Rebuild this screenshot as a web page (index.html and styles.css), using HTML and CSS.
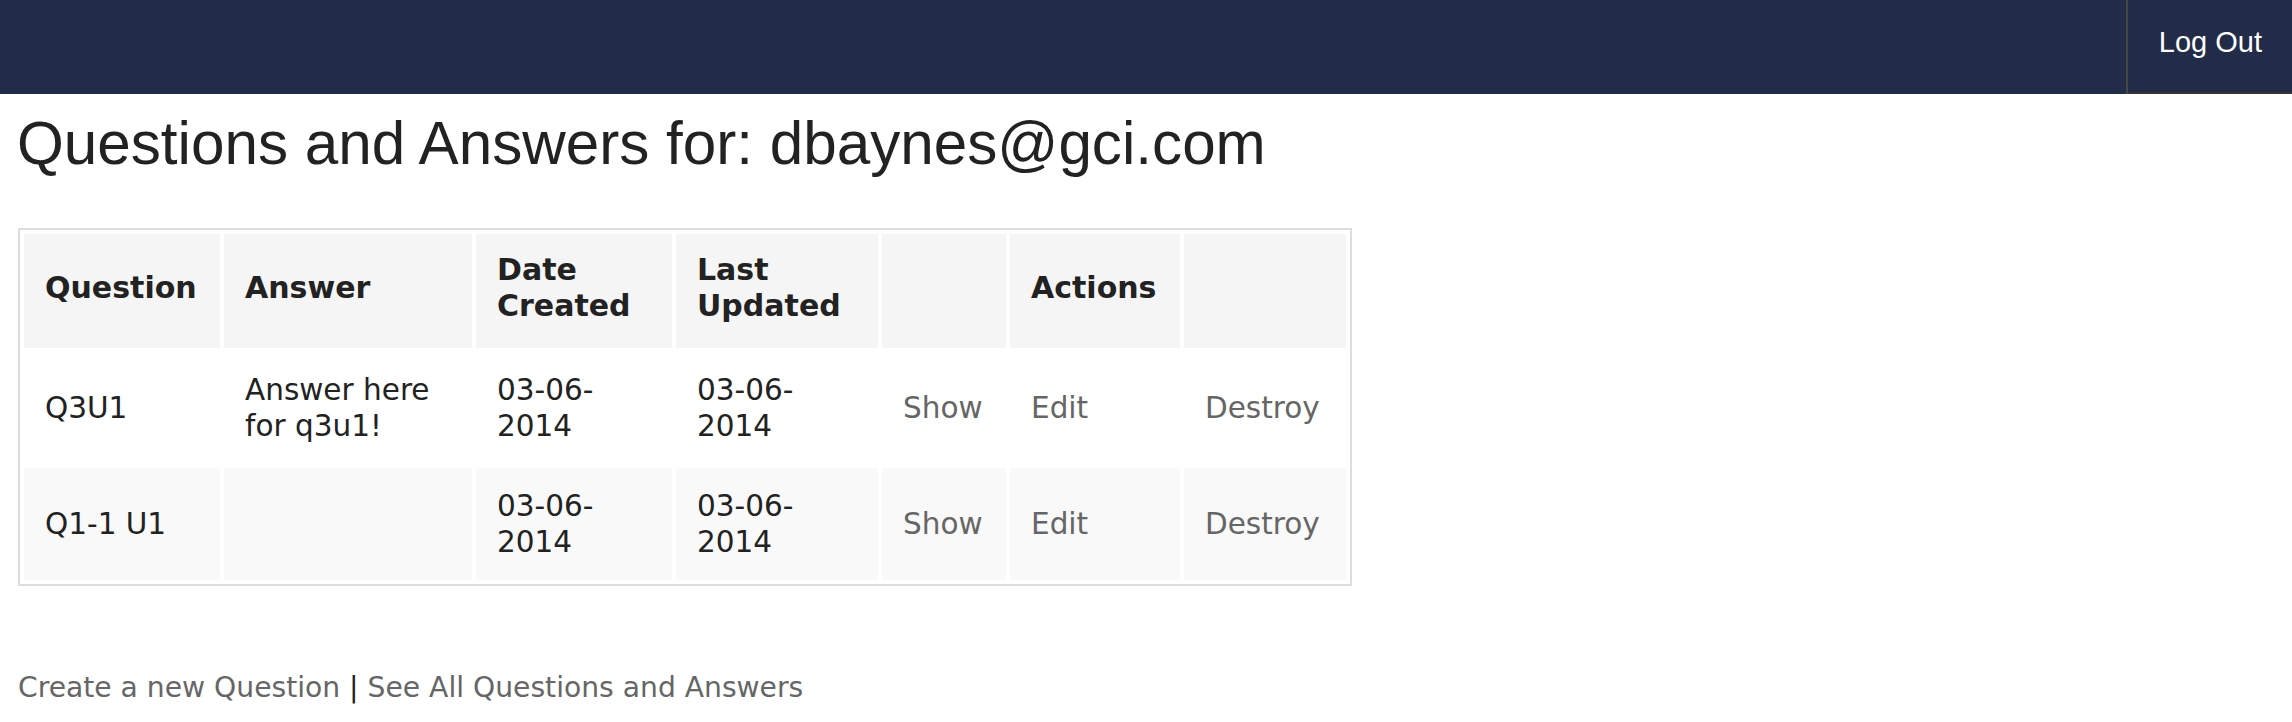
FILE: index.html
```html
<!DOCTYPE html>
<html lang="en">
<head>
<meta charset="utf-8">
<title>Questions and Answers</title>
<link rel="stylesheet" href="styles.css">
</head>
<body>
<nav class="topbar">
  <div class="topbar-fill"></div>
  <ul class="nav-right">
    <li class="nav-item"><a class="nav-link" href="#">Log Out</a></li>
  </ul>
</nav>
<main class="page">
  <h1 class="title">Questions and Answers for: dbaynes@gci.com</h1>
  <table class="qa-table">
    <colgroup>
      <col class="w-q"><col class="w-a"><col class="w-dc"><col class="w-lu"><col class="w-show"><col class="w-edit"><col class="w-destroy">
    </colgroup>
    <thead>
      <tr>
        <th>Question</th>
        <th>Answer</th>
        <th>Date Created</th>
        <th>Last Updated</th>
        <th></th>
        <th>Actions</th>
        <th></th>
      </tr>
    </thead>
    <tbody>
      <tr class="row-odd">
        <td>Q3U1</td>
        <td>Answer here for q3u1!</td>
        <td>03-06-2014</td>
        <td>03-06-2014</td>
        <td><a class="link" href="#">Show</a></td>
        <td><a class="link" href="#">Edit</a></td>
        <td><a class="link" href="#">Destroy</a></td>
      </tr>
      <tr class="row-even">
        <td>Q1-1 U1</td>
        <td></td>
        <td>03-06-2014</td>
        <td>03-06-2014</td>
        <td><a class="link" href="#">Show</a></td>
        <td><a class="link" href="#">Edit</a></td>
        <td><a class="link" href="#">Destroy</a></td>
      </tr>
    </tbody>
  </table>
  <p class="footer-links"><a class="link" href="#">Create a new Question</a> | <a class="link" href="#">See All Questions and Answers</a></p>
</main>
</body>
</html>
```

FILE: styles.css
```css
html, body {
  margin: 0;
  padding: 0;
  background: #ffffff;
}

body {
  font-family: "DejaVu Sans", Verdana, sans-serif;
  color: #222222;
}

.topbar {
  display: flex;
  height: 94px;
  background: #222c48;
}

.topbar-fill {
  flex: 1;
}

.nav-right {
  display: flex;
  margin: 0;
  padding: 0;
  list-style: none;
}

.nav-item {
  border-left: 2px solid #464646;
}

.nav-link {
  display: block;
  padding: 0 30px 7px 31px;
  line-height: 85px;
  font-family: "Liberation Sans", Arial, sans-serif;
  font-size: 29px;
  color: #ffffff;
  text-decoration: none;
  border-bottom: 2px solid #333333;
}

.page {
  padding: 0 18px;
}

.title {
  margin: 15px 0 0 -1px;
  font-family: "Liberation Sans", Arial, sans-serif;
  font-weight: normal;
  font-size: 60.2px;
  line-height: 69px;
  color: #222222;
}

.qa-table {
  margin-top: 50px;
  table-layout: fixed;
  width: 1334px;
  border: 2px solid #dddddd;
  border-spacing: 4px;
  border-collapse: separate;
}

.w-q { width: 196px; }
.w-a { width: 248px; }
.w-dc { width: 196px; }
.w-lu { width: 202px; }
.w-show { width: 124px; }
.w-edit { width: 170px; }
.w-destroy { width: 162px; }

.qa-table th,
.qa-table td {
  box-sizing: border-box;
  text-align: left;
  vertical-align: middle;
  line-height: 36px;
}

.qa-table th {
  padding: 18px 21px 24px;
  background: #f5f5f5;
  font-weight: bold;
  font-size: 30px;
  color: #222222;
}

.qa-table td {
  padding: 20px 21px;
  font-size: 29.5px;
  color: #222222;
}

.row-odd td {
  background: #ffffff;
}

.row-even td {
  background: #f9f9f9;
}

.link {
  color: #666666;
  text-decoration: none;
}

.footer-links {
  margin: 85px 0 0;
  font-size: 28.2px;
  line-height: 34px;
  color: #222222;
}
```
